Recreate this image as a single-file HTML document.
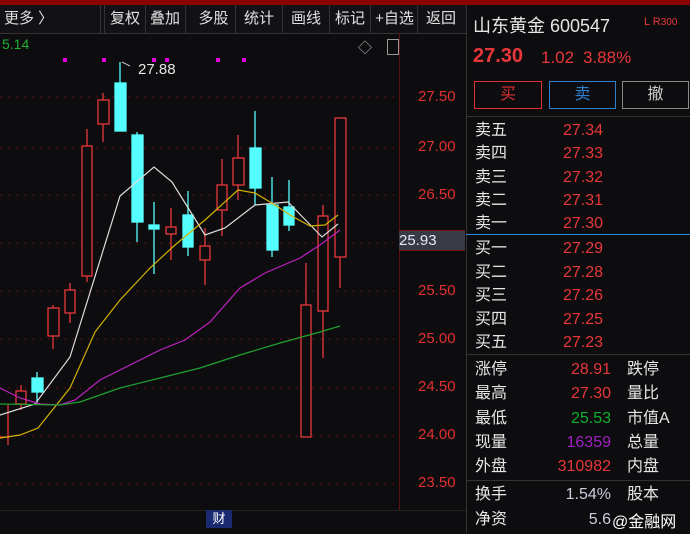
<!DOCTYPE html><html><head><meta charset="utf-8"><style>
body{margin:0;width:690px;height:533px;background:#0d0d10;overflow:hidden;position:relative;font-family:"Liberation Sans","Noto Sans CJK SC",sans-serif;color:#ddd}
.a{position:absolute;white-space:nowrap}
.tb{top:5px;height:28px;line-height:28px;font-size:15px;color:#e0e0e0;border-right:1px solid #333}
.ax{color:#e03030;font-size:15px;left:418px}
.r{font-size:16px}
.w{color:#e6e6e6}.red{color:#e8373a}
</style></head><body>
<div class="a" style="left:0;top:0;width:690px;height:5px;background:#8b0000"></div>
<div class="a" style="left:0;top:5px;width:466px;height:28px;background:#121216;border-bottom:1px solid #333"></div>
<div class="a tb" style="left:4px;width:96px">更多 〉</div>
<div class="a tb" style="left:104px;width:40px;text-align:center;border-left:1px solid #333">复权</div>
<div class="a tb" style="left:145px;width:40px;text-align:center">叠加</div>
<div class="a tb" style="left:192px;width:43px;text-align:center">多股</div>
<div class="a tb" style="left:236px;width:46px;text-align:center">统计</div>
<div class="a tb" style="left:283px;width:46px;text-align:center">画线</div>
<div class="a tb" style="left:330px;width:40px;text-align:center">标记</div>
<div class="a tb" style="left:372px;width:45px;text-align:center">+自选</div>
<div class="a tb" style="left:419px;width:44px;text-align:center;border:none">返回</div>
<div class="a" style="left:2px;top:36px;color:#20b030;font-size:14px">5.14</div>
<div class="a" style="left:358px;top:38px;color:#aaa;font-size:14px">◇</div>
<div class="a" style="left:387px;top:39px;width:10px;height:14px;border:1px solid #999"></div>
<svg class="a" style="left:0;top:0" width="466" height="533">
<g stroke="#5a1010" stroke-dasharray="2,6" stroke-width="1">
<line x1="0" y1="97" x2="399" y2="97"/><line x1="0" y1="148" x2="399" y2="148"/><line x1="0" y1="195" x2="399" y2="195"/><line x1="0" y1="243" x2="399" y2="243"/><line x1="0" y1="291" x2="399" y2="291"/><line x1="0" y1="339" x2="399" y2="339"/><line x1="0" y1="388" x2="399" y2="388"/><line x1="0" y1="436" x2="399" y2="436"/><line x1="0" y1="484" x2="399" y2="484"/>
</g>
<line x1="399.5" y1="33" x2="399.5" y2="510" stroke="#5a1010"/>
<g fill="#e000e0"><rect x="63" y="58" width="4" height="4"/><rect x="102" y="58" width="4" height="4"/><rect x="152" y="58" width="4" height="4"/><rect x="165" y="58" width="4" height="4"/><rect x="216" y="58" width="4" height="4"/><rect x="242" y="58" width="4" height="4"/></g>
<g fill="none" stroke="#e8373a" stroke-width="1.3">
<path d="M8 405V445M0 437H10"/>
<path d="M21 385V410"/><rect x="16" y="391" width="10" height="13" fill="#0d0d10"/>
<path d="M53 305V349"/><rect x="48" y="308" width="11" height="28" fill="#0d0d10"/>
<path d="M70 283V323"/><rect x="65" y="290" width="10" height="23" fill="#0d0d10"/>
<path d="M87 129V282"/><rect x="82" y="146" width="10" height="130" fill="#0d0d10"/>
<path d="M103 93V142"/><rect x="98" y="100" width="11" height="24" fill="#0d0d10"/>
<path d="M171 208V260"/><rect x="166" y="227" width="10" height="7" fill="#0d0d10"/>
<path d="M205 228V285"/><rect x="200" y="246" width="10" height="14" fill="#0d0d10"/>
<path d="M222 159V236"/><rect x="217" y="185" width="10" height="25" fill="#0d0d10"/>
<path d="M238 135V200"/><rect x="233" y="158" width="11" height="27" fill="#0d0d10"/>
<path d="M306 263V437"/><rect x="301" y="305" width="10" height="132" fill="#0d0d10"/>
<path d="M323 205V358"/><rect x="318" y="216" width="10" height="95" fill="#0d0d10"/>
<path d="M340 118V288"/><rect x="335" y="118" width="11" height="139" fill="#0d0d10"/>
</g>
<g stroke="#55ffff" fill="#55ffff" stroke-width="1.3">
<path d="M37 372V405"/><rect x="32" y="378" width="11" height="14"/>
<path d="M120 62V131"/><rect x="115" y="83" width="11" height="48"/>
<path d="M137 132V242"/><rect x="132" y="135" width="11" height="87"/>
<path d="M154 202V274"/><rect x="149" y="225" width="10" height="4"/>
<path d="M188 191V256"/><rect x="183" y="215" width="10" height="32"/>
<path d="M255 111V205"/><rect x="250" y="148" width="11" height="40"/>
<path d="M272 177V257"/><rect x="267" y="205" width="11" height="45"/>
<path d="M289 180V231"/><rect x="284" y="207" width="10" height="18"/>
</g>
<g fill="none" stroke-width="1.2">
<polyline stroke="#dddddd" points="0,415 35,404 70,357 120,196 154,167 172,182 205,235 225,228 255,205 288,202 322,237 338,224"/>
<polyline stroke="#d4b000" points="0,438 20,435 38,428 70,388 95,332 120,300 150,268 175,245 205,220 238,190 255,193 275,205 290,215 310,226 325,225 338,215"/>
<polyline stroke="#c020c0" points="0,388 20,398 40,404 60,405 75,400 100,380 130,365 160,350 185,340 210,322 240,288 265,273 300,258 320,245 340,230"/>
<polyline stroke="#20a030" points="0,404 60,405 80,402 120,388 160,378 200,368 240,355 280,343 320,332 340,326"/>
</g>
<path d="M122 62L130 66" stroke="#ccc" fill="none"/>
</svg>
<div class="a" style="left:138px;top:61px;font-size:15px;color:#e6e6e6">27.88</div>
<div class="a ax" style="top:88px">27.50</div>
<div class="a ax" style="top:138px">27.00</div>
<div class="a ax" style="top:186px">26.50</div>
<div class="a ax" style="top:282px">25.50</div>
<div class="a ax" style="top:330px">25.00</div>
<div class="a ax" style="top:378px">24.50</div>
<div class="a ax" style="top:426px">24.00</div>
<div class="a ax" style="top:474px">23.50</div>
<div class="a" style="left:399px;top:230px;width:66px;height:19px;background:#3a3a44;border-top:1px solid #7a1010;border-bottom:1px solid #7a1010;color:#e6e6ff;font-size:15px;line-height:19px">25.93</div>
<div class="a" style="left:0;top:510px;width:466px;height:23px;background:#0d0d10;border-top:1px solid #222"></div>
<div class="a" style="left:206px;top:510px;width:26px;height:18px;background:#1a2a70;color:#fff;font-size:13px;text-align:center;line-height:18px">财</div>
<div class="a" style="left:466px;top:0;width:224px;height:533px;background:#0d0d10;border-left:1px solid #333"></div>
<div class="a" style="left:466px;top:0;width:224px;height:5px;background:#8b0000"></div>
<div class="a w" style="left:473px;top:12px;font-size:18px">山东黄金 600547</div>
<div class="a red" style="left:644px;top:16px;font-size:11px">L R<span style="font-size:10px">300</span></div>
<div class="a red" style="left:473px;top:45px;font-size:20px;font-weight:bold">27.30</div>
<div class="a red" style="left:541px;top:48px;font-size:17px">1.02</div>
<div class="a red" style="left:583px;top:48px;font-size:17px">3.88%</div>
<div class="a" style="left:474px;top:81px;width:66px;height:26px;border:1px solid #e03030;color:#e03030;text-align:center;line-height:26px;font-size:16px">买</div>
<div class="a" style="left:549px;top:81px;width:65px;height:26px;border:1px solid #3080d0;color:#3080d0;text-align:center;line-height:26px;font-size:16px">卖</div>
<div class="a" style="left:622px;top:81px;width:65px;height:26px;border:1px solid #888;color:#ccc;text-align:center;line-height:26px;font-size:16px">撤</div>
<div class="a" style="left:466px;top:116px;width:224px;height:1px;background:#333"></div>
<div class="a" style="left:466px;top:234px;width:224px;height:1px;background:#2a8ae0"></div>
<div class="a r w" style="left:475px;top:119px;line-height:23.3px">卖五<br>卖四<br>卖三<br>卖二<br>卖一</div>
<div class="a r red" style="left:563px;top:119px;line-height:23.3px">27.34<br>27.33<br>27.32<br>27.31<br>27.30</div>
<div class="a r w" style="left:475px;top:237px;line-height:23.5px">买一<br>买二<br>买三<br>买四<br>买五</div>
<div class="a r red" style="left:563px;top:237px;line-height:23.5px">27.29<br>27.28<br>27.26<br>27.25<br>27.23</div>
<div class="a" style="left:466px;top:354px;width:224px;height:1px;background:#333"></div>
<div class="a r w" style="left:475px;top:358px;line-height:24.3px">涨停<br>最高<br>最低<br>现量<br>外盘</div>
<div class="a r" style="left:540px;top:358px;line-height:24.3px;width:71px;text-align:right"><span class="red">28.91</span><br><span class="red">27.30</span><br><span style="color:#10b030">25.53</span><br><span style="color:#a020c0">16359</span><br><span class="red">310982</span></div>
<div class="a r w" style="left:627px;top:358px;line-height:24.3px">跌停<br>量比<br>市值A<br>总量<br>内盘</div>
<div class="a" style="left:466px;top:480px;width:224px;height:1px;background:#333"></div>
<div class="a r w" style="left:475px;top:483px;line-height:24.5px">换手<br>净资</div>
<div class="a r" style="left:540px;top:483px;line-height:24.5px;width:71px;text-align:right;color:#ccd">1.54%<br>5.6</div>
<div class="a r w" style="left:627px;top:483px;line-height:24.5px">股本</div>
<div class="a" style="left:612px;top:508px;font-size:16px;color:#fff">@金融网</div>
</body></html>
